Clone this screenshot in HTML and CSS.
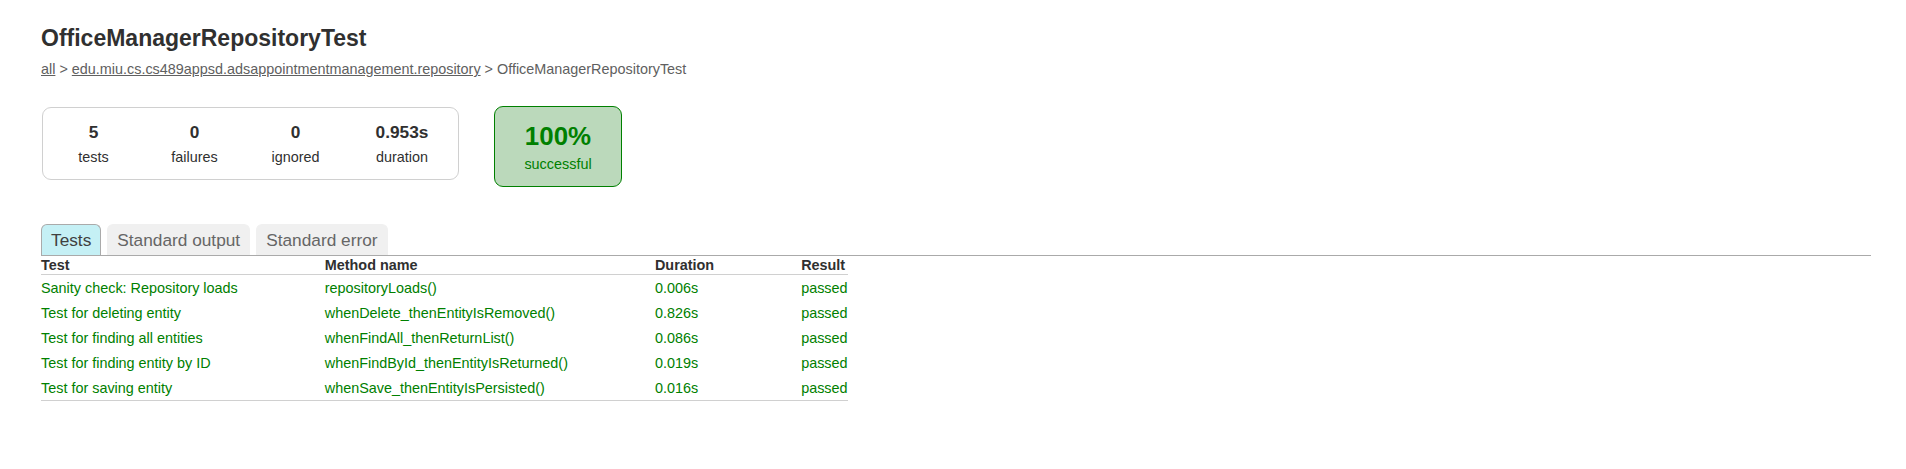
FILE: index.html
```html
<!DOCTYPE html>
<html>
<head>
<meta charset="utf-8">
<title>Test results - OfficeManagerRepositoryTest</title>
<link rel="stylesheet" href="styles.css">
</head>
<body>
<div class="content">
  <h1 class="title">OfficeManagerRepositoryTest</h1>
  <div class="breadcrumbs">
    <a href="#">all</a> &gt;
    <a href="#">edu.miu.cs.cs489appsd.adsappointmentmanagement.repository</a> &gt; OfficeManagerRepositoryTest
  </div>

  <div class="summary">
    <div class="summary-group">
      <div class="info-box">
        <div class="counter">5</div>
        <p class="info-label">tests</p>
      </div>
      <div class="info-box">
        <div class="counter">0</div>
        <p class="info-label">failures</p>
      </div>
      <div class="info-box">
        <div class="counter">0</div>
        <p class="info-label">ignored</p>
      </div>
      <div class="info-box duration">
        <div class="counter">0.953s</div>
        <p class="info-label">duration</p>
      </div>
    </div>
    <div class="success-rate">
      <div class="percent">100%</div>
      <p class="info-label">successful</p>
    </div>
  </div>

  <ul class="tab-links">
    <li class="tab selected"><a href="#">Tests</a></li>
    <li class="tab"><a href="#">Standard output</a></li>
    <li class="tab"><a href="#">Standard error</a></li>
  </ul>

  <table class="results">
    <thead>
      <tr>
        <th>Test</th>
        <th>Method name</th>
        <th>Duration</th>
        <th>Result</th>
      </tr>
    </thead>
    <tbody>
      <tr>
        <td>Sanity check: Repository loads</td>
        <td>repositoryLoads()</td>
        <td>0.006s</td>
        <td>passed</td>
      </tr>
      <tr>
        <td>Test for deleting entity</td>
        <td>whenDelete_thenEntityIsRemoved()</td>
        <td>0.826s</td>
        <td>passed</td>
      </tr>
      <tr>
        <td>Test for finding all entities</td>
        <td>whenFindAll_thenReturnList()</td>
        <td>0.086s</td>
        <td>passed</td>
      </tr>
      <tr>
        <td>Test for finding entity by ID</td>
        <td>whenFindById_thenEntityIsReturned()</td>
        <td>0.019s</td>
        <td>passed</td>
      </tr>
      <tr>
        <td>Test for saving entity</td>
        <td>whenSave_thenEntityIsPersisted()</td>
        <td>0.016s</td>
        <td>passed</td>
      </tr>
    </tbody>
  </table>
</div>
</body>
</html>
```

FILE: styles.css
```css
html, body {
  margin: 0;
  padding: 0;
  background: #ffffff;
}

body {
  font-family: "Liberation Sans", Arial, sans-serif;
  font-size: 14.4px;
  color: #303030;
}

.content {
  padding: 25px 35px 30px 41px;
}

.title {
  margin: 0;
  font-size: 23px;
  line-height: 27px;
  font-weight: bold;
  color: #303030;
  white-space: nowrap;
}

.breadcrumbs {
  margin-top: 9px;
  line-height: 17px;
  color: #606060;
  white-space: nowrap;
}

.breadcrumbs a {
  color: #606060;
  text-decoration: underline;
}

.summary {
  display: flex;
  align-items: flex-start;
  margin-top: 28px;
  padding-left: 1px;
}

.summary-group {
  display: flex;
  margin-top: 1px;
  border: 1px solid #d0d0d0;
  border-radius: 9px;
}

.info-box {
  width: 101px;
  padding: 14px 0 13px;
  text-align: center;
}

.info-box.duration {
  width: 112px;
}

.counter {
  font-size: 17.28px;
  line-height: 20px;
  font-weight: bold;
  margin-bottom: 7px;
}

.info-label {
  margin: 0;
  line-height: 17px;
}

.success-rate {
  width: 126px;
  margin-left: 35px;
  padding: 15px 0 13px;
  text-align: center;
  border: 1px solid #008000;
  border-radius: 9px;
  background-color: #bbd9bb;
  color: #008000;
}

.percent {
  font-size: 25.92px;
  line-height: 28px;
  font-weight: bold;
  margin-bottom: 6px;
}

.tab-links {
  display: flex;
  list-style: none;
  margin: 37px 0 0;
  padding: 0;
  border-bottom: 1px solid #aaaaaa;
}

.tab {
  padding: 5px 9px;
  margin-right: 6px;
  border: 1px solid #f0f0f0;
  border-bottom: 0;
  border-radius: 6px 6px 0 0;
  background-color: #f0f0f0;
}

.tab.selected {
  background-color: #c5f0f5;
  border-color: #aaaaaa;
}

.tab a {
  display: block;
  font-size: 17.28px;
  line-height: 20px;
  color: #666666;
  text-decoration: none;
}

.tab.selected a {
  color: #404040;
}

.results {
  border-collapse: collapse;
  border-bottom: 1px solid #d0d0d0;
}

.results th {
  text-align: left;
  white-space: nowrap;
  font-weight: bold;
  line-height: 17px;
  padding: 1px 0 0 87px;
  border-bottom: 1px solid #d0d0d0;
  color: #303030;
}

.results td {
  white-space: nowrap;
  line-height: 16px;
  padding: 5px 0 4px 87px;
  color: #008000;
}

.results th:first-child,
.results td:first-child {
  padding-left: 0;
}
```
